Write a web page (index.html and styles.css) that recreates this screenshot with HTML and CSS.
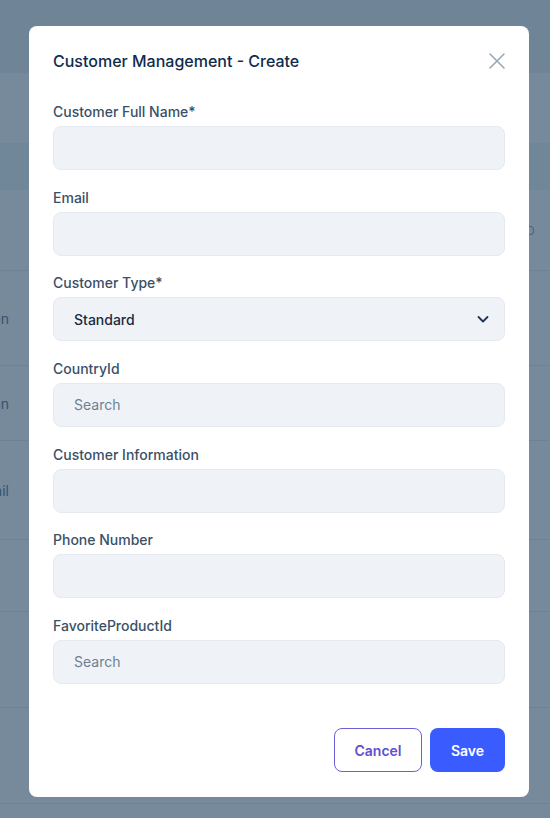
FILE: index.html
```html
<!DOCTYPE html>
<html lang="en">
<head>
<meta charset="utf-8">
<title>Customer Management - Create</title>
<link rel="stylesheet" href="styles.css">
</head>
<body>
<div class="page">
  <div class="pg-top"></div>
  <div class="pg-band"></div>
  <div class="pg-head"></div>
  <div class="pg-row h81"><span class="pg-right">D</span></div>
  <div class="pg-row h95"><div class="clip"><span>Action</span></div></div>
  <div class="pg-row h75"><div class="clip"><span>Action</span></div></div>
  <div class="pg-row h99"><div class="clip"><span>Detail</span></div></div>
  <div class="pg-row h72"></div>
  <div class="pg-row h96"></div>
  <div class="pg-row h96"></div>
  <div class="pg-row h40"></div>
</div>

<div class="overlay">
  <div class="modal">
    <div class="modal-header">
      <h2 class="modal-title">Customer Management - Create</h2>
      <svg class="close" width="18" height="18" viewBox="0 0 18 18" aria-label="Close">
        <path d="M2 2L16 16M16 2L2 16" stroke="#9aa7b5" stroke-width="1.6" fill="none" stroke-linecap="round"/>
      </svg>
    </div>
    <div class="form">
      <div class="field">
        <label class="label">Customer Full Name*</label>
        <div class="input"></div>
      </div>
      <div class="field">
        <label class="label">Email</label>
        <div class="input"></div>
      </div>
      <div class="field">
        <label class="label">Customer Type*</label>
        <div class="input select">
          <span class="value">Standard</span>
          <svg width="12" height="12" viewBox="0 0 12 12"><path d="M1.5 4L6 8.5L10.5 4" stroke="#1f3552" stroke-width="1.8" fill="none" stroke-linecap="round" stroke-linejoin="round"/></svg>
        </div>
      </div>
      <div class="field">
        <label class="label">CountryId</label>
        <div class="input"><span class="placeholder">Search</span></div>
      </div>
      <div class="field">
        <label class="label">Customer Information</label>
        <div class="input"></div>
      </div>
      <div class="field">
        <label class="label">Phone Number</label>
        <div class="input"></div>
      </div>
      <div class="field">
        <label class="label">FavoriteProductId</label>
        <div class="input"><span class="placeholder">Search</span></div>
      </div>
    </div>
    <div class="footer">
      <button class="btn btn-cancel">Cancel</button>
      <button class="btn btn-save">Save</button>
    </div>
  </div>
</div>
</body>
</html>
```
FILE: styles.css
```css
* { box-sizing: border-box; }
html, body { margin: 0; padding: 0; }
body {
  font-family: Inter, "Noto Sans", sans-serif;
  background: #ffffff;
  width: 550px;
  height: 818px;
  overflow: hidden;
}

/* underlying page */
.page { width: 550px; }
.pg-top { height: 73px; background: #eef2f6; }
.pg-band { height: 70px; background: #ffffff; }
.pg-head { height: 47px; background: #f1f5f9; }
.pg-row {
  border-bottom: 1px solid #e6ebf1;
  display: flex;
  align-items: center;
  font-size: 14px;
  color: #64748b;
}
.h81 { height: 81px; }
.h95 { height: 95px; }
.h75 { height: 75px; }
.h99 { height: 99px; }
.h72 { height: 72px; }
.h96 { height: 96px; }
.h40 { height: 40px; }
.clip {
  width: 9px;
  overflow: hidden;
  display: flex;
  justify-content: flex-end;
  white-space: nowrap;
}
.pg-right { margin-left: 526px; color: #94a3b8; font-size: 12px; }

/* overlay + modal */
.overlay {
  position: fixed;
  inset: 0;
  background: rgba(27, 60, 88, 0.6);
  padding: 26px 0 0 29px;
}
.modal {
  width: 500px;
  height: 771px;
  background: #ffffff;
  border-radius: 8px;
  padding: 23px 24px 25px 24px;
  display: flex;
  flex-direction: column;
}
.modal-header {
  display: flex;
  justify-content: space-between;
  align-items: center;
  height: 24px;
}
.modal-title {
  margin: 0;
  font-size: 16px;
  line-height: 24px;
  font-weight: 500;
  color: #0f2c4c;
}
.close { margin-right: -1px; }

.form {
  margin-top: 29px;
  display: flex;
  flex-direction: column;
  gap: 17.67px;
}
.field { display: flex; flex-direction: column; }
.label {
  font-size: 14px;
  line-height: 20px;
  font-weight: 500;
  color: #3a5068;
  margin-bottom: 4px;
}
.input {
  height: 44px;
  background: #eff3f7;
  border: 1px solid #e5eaf0;
  border-radius: 8px;
  padding: 0 15px 0 20px;
  display: flex;
  align-items: center;
  font-size: 14px;
}
.select { justify-content: space-between; }
.value { color: #1a2b42; font-weight: 500; }
.placeholder { color: #6e7f92; }

.footer {
  margin-top: auto;
  display: flex;
  justify-content: flex-end;
  gap: 8px;
}
.btn {
  height: 44px;
  border-radius: 8px;
  font-family: Inter, "Noto Sans", sans-serif;
  font-size: 14px;
  font-weight: 600;
  cursor: pointer;
}
.btn-cancel {
  width: 88px;
  background: #ffffff;
  border: 1px solid #6b5fd6;
  color: #5e50cf;
}
.btn-save {
  width: 75px;
  background: #3a5cff;
  border: none;
  color: #ffffff;
}
```
